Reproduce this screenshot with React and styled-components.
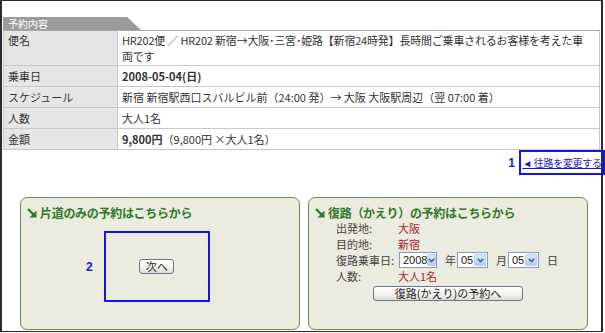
import React from 'react';
import styled, { createGlobalStyle } from 'styled-components';

const GlobalStyle = createGlobalStyle`
  html, body {
    margin: 0;
    padding: 0;
    background: #fff;
  }
  body {
    font-family: "Noto Sans CJK JP", "Noto Sans", sans-serif;
    font-size: 12px;
    color: #333;
  }
`;

const reservation = [
  {
    label: '便名',
    lines: ['HR202便 ／ HR202  新宿→大阪･三宮･姫路【新宿24時発】長時間ご乗車されるお客様を考えた車', '両です'],
  },
  { label: '乗車日', value: '2008-05-04(日)', bold: true },
  { label: 'スケジュール', value: '新宿  新宿駅西口スバルビル前（24:00 発）→ 大阪  大阪駅周辺（翌 07:00 着）' },
  { label: '人数', value: '大人1名' },
  { label: '金額', price: '9,800円', value: '（9,800円 ×大人1名）' },
];

const Arrow = () => (
  <svg width="10" height="10" viewBox="0 0 10 10">
    <line x1="1" y1="1" x2="7" y2="7" stroke="#2f7a28" strokeWidth="2.4" />
    <polygon points="9.5,2.5 9.5,9.5 2.5,9.5" fill="#2f7a28" />
  </svg>
);

const Chevron = () => (
  <svg width="7" height="5" viewBox="0 0 7 5">
    <polyline points="0.8,0.8 3.5,3.6 6.2,0.8" fill="none" stroke="#4d6185" strokeWidth="1.6" />
  </svg>
);

const Select = ({ value, width }) => (
  <SelectBox $width={width}>
    <SelectValue>{value}</SelectValue>
    <SelectButton><Chevron /></SelectButton>
  </SelectBox>
);

const App = () => {
  return (
    <>
      <GlobalStyle />
      <Frame>
        <Section>
          <Tab>予約内容</Tab>
          <Table>
            <tbody>
              {reservation.map((row) => (
                <tr key={row.label}>
                  <Label $multi={!!row.lines}>{row.label}</Label>
                  <Value $bold={row.bold} $multi={!!row.lines}>
                    {row.lines
                      ? row.lines.map((l, i) => <Line key={i}>{l}</Line>)
                      : null}
                    {row.price && <Price>{row.price}</Price>}
                    {row.value}
                  </Value>
                </tr>
              ))}
            </tbody>
          </Table>
          <LinkRow>
            <Marker>1</Marker>
            <MarkBox $w={86} $h={25}>
              <ChangeLink href="#">◄ 往路を変更する</ChangeLink>
            </MarkBox>
          </LinkRow>
        </Section>

        <Panels>
          <Panel>
            <PanelTitle><Arrow />片道のみの予約はこちらから</PanelTitle>
            <OneWayBody>
              <Marker>2</Marker>
              <MarkBox $w={106} $h={71}>
                <Button>次へ</Button>
              </MarkBox>
            </OneWayBody>
          </Panel>

          <Panel>
            <PanelTitle><Arrow />復路（かえり）の予約はこちらから</PanelTitle>
            <ReturnGrid>
              <FieldLabel>出発地:</FieldLabel>
              <FieldValue>大阪</FieldValue>
              <FieldLabel>目的地:</FieldLabel>
              <FieldValue>新宿</FieldValue>
              <FieldLabel $tall>復路乗車日:</FieldLabel>
              <DateRow>
                <Select value="2008" width={38} />
                <Unit>年</Unit>
                <Select value="05" width={31} />
                <Unit>月</Unit>
                <Select value="05" width={31} />
                <Unit>日</Unit>
              </DateRow>
              <FieldLabel>人数:</FieldLabel>
              <FieldValue>大人1名</FieldValue>
            </ReturnGrid>
            <ButtonRow>
              <Button $wide>復路(かえり)の予約へ</Button>
            </ButtonRow>
          </Panel>
        </Panels>
      </Frame>
    </>
  );
};

const Frame = styled.div`
  box-sizing: border-box;
  width: 603px;
  height: 332px;
  border: 1px solid #2b2b2b;
  border-left-width: 2px;
  border-right-width: 2px;
  background: #fff;
`;

const Section = styled.div`
  padding: 16px 0 0 1px;
`;

const Tab = styled.div`
  width: 138px;
  height: 13px;
  line-height: 13px;
  padding-left: 5px;
  box-sizing: border-box;
  background: #9b9b9b;
  color: #fff;
  font-size: 10px;
  clip-path: polygon(0 0, 124px 0, 100% 100%, 0 100%);
`;

const Table = styled.table`
  width: 597px;
  border-collapse: collapse;
  border-top: 1px solid #a5a5a5;
  border-bottom: 1px solid #c8c8c8;
  border-left: 1px solid #c8c8c8;
  border-right: 1px solid #c8c8c8;

  td {
    padding: 2px 4px;
    line-height: 16px;
    border-bottom: 1px solid #c8c8c8;
    vertical-align: top;
    font-size: 11px;
  }
`;

const Label = styled.td`
  width: 105px;
  background: #e6e6e6;
  border-right: 1px solid #c8c8c8;
  color: #333;
  && {
    padding-top: ${(p) => (p.$multi ? '1px' : '2px')};
  }
`;

const Value = styled.td`
  background: #fff;
  color: #333;
  font-weight: ${(p) => (p.$bold ? 700 : 400)};
  && {
    padding-top: ${(p) => (p.$multi ? '1px' : '2px')};
    padding-bottom: ${(p) => (p.$multi ? '1px' : '2px')};
  }
`;

const Line = styled.div`
  white-space: nowrap;
  letter-spacing: -0.2px;
`;

const Price = styled.span`
  font-weight: 700;
`;

const LinkRow = styled.div`
  display: flex;
  justify-content: flex-end;
  align-items: center;
  gap: 4px;
  margin-right: -4px;
  margin-top: 0px;
`;

const Marker = styled.span`
  color: #1818d8;
  font-weight: 700;
  font-size: 12px;
  font-family: "Liberation Sans", sans-serif;
`;

const MarkBox = styled.div`
  box-sizing: border-box;
  width: ${(p) => p.$w}px;
  height: ${(p) => p.$h}px;
  border: 2px solid #1414f0;
  display: flex;
  align-items: center;
  justify-content: center;
`;

const ChangeLink = styled.a`
  color: #1a1acc;
  font-size: 10px;
  letter-spacing: -0.3px;
  white-space: nowrap;
  text-decoration: underline;
`;

const Panels = styled.div`
  display: flex;
  gap: 8px;
  padding-left: 18px;
  margin-top: 22px;
`;

const Panel = styled.div`
  box-sizing: border-box;
  width: 280px;
  height: 133px;
  border: 1px solid #5f8d57;
  border-radius: 7px;
  background: #ecebe0;
  padding: 8px 0 0 6px;
`;

const PanelTitle = styled.div`
  display: flex;
  align-items: center;
  gap: 3px;
  color: #2f7a28;
  font-weight: 700;
  font-size: 12px;
  line-height: 14px;
  letter-spacing: -0.3px;
`;

const OneWayBody = styled.div`
  display: flex;
  align-items: center;
  gap: 11px;
  margin-top: 11px;
  padding-left: 59px;
`;

const ReturnGrid = styled.div`
  display: grid;
  grid-template-columns: 62px auto;
  grid-auto-rows: 16px;
  align-items: center;
  padding-left: 21px;

  & > :nth-child(5),
  & > :nth-child(6) {
    height: 22px;
  }
`;

const FieldLabel = styled.div`
  color: #444;
  font-size: 11px;
  line-height: ${(p) => (p.$tall ? '22px' : '16px')};
`;

const FieldValue = styled.div`
  color: #a3282a;
  font-size: 11px;
  line-height: 16px;
`;

const DateRow = styled.div`
  display: flex;
  align-items: center;
  margin-left: 1px;
`;

const Unit = styled.span`
  color: #444;
  font-size: 11px;
  margin: 0 1px 0 8px;
`;

const SelectBox = styled.div`
  box-sizing: border-box;
  width: ${(p) => p.$width}px;
  height: 16px;
  border: 1px solid #7f9db9;
  background: #fff;
  display: flex;
  align-items: center;
  justify-content: space-between;
  padding: 1px 1px 1px 3px;
`;

const SelectValue = styled.span`
  font-size: 11px;
  line-height: 12px;
  color: #222;
  font-family: "Liberation Sans", sans-serif;
`;

const SelectButton = styled.span`
  box-sizing: border-box;
  width: 12px;
  height: 12px;
  border: 1px solid #b9cdf5;
  border-radius: 1px;
  background: linear-gradient(#dbe6fe, #b7cbf9);
  display: flex;
  align-items: center;
  justify-content: center;
`;

const ButtonRow = styled.div`
  display: flex;
  justify-content: center;
  padding-right: 6px;
  margin-top: 2px;
`;

const Button = styled.button`
  box-sizing: border-box;
  width: ${(p) => (p.$wide ? '150px' : '35px')};
  height: 15px;
  padding: 0;
  border: 1px solid #69788a;
  border-radius: 3px;
  background: linear-gradient(#ffffff, #f1f0ea 60%, #dddbd2);
  color: #222;
  font-family: "Noto Sans CJK JP", sans-serif;
  font-size: 11px;
  line-height: 13px;
  cursor: pointer;
`;

export default App;
